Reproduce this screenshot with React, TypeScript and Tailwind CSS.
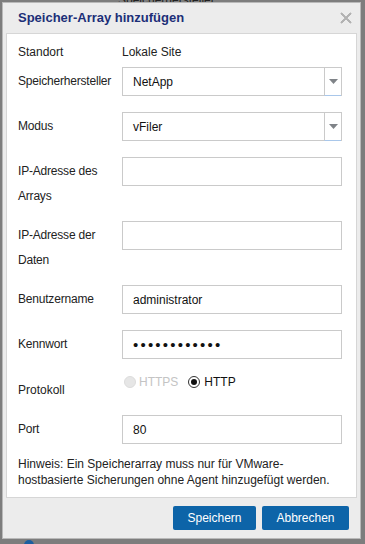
import React from 'react';

const font = { fontFamily: '"Liberation Sans", Arial, sans-serif' };

function Label({ children }: { children: React.ReactNode }) {
  return (
    <div className="w-[104px] shrink-0 pt-[2px] leading-[25px] text-[12px] tracking-[-0.2px] text-[#222]">{children}</div>
  );
}

function TextBox({ value, type = 'text' }: { value?: string; type?: string }) {
  const isPwd = type === 'password';
  return (
    <input
      type={type}
      readOnly
      value={value ?? ''}
      className={
        isPwd
          ? 'h-[29px] w-[220px] border border-[#cacaca] bg-white pl-[10px] text-[15px] tracking-[2.2px] text-[#111] outline-none'
          : 'h-[29px] w-[220px] border border-[#cacaca] bg-white pl-[10px] text-[12px] text-[#111] outline-none'
      }
      style={font}
    />
  );
}

function Select({ value }: { value: string }) {
  return (
    <div className="flex h-[29px] w-[220px] border border-[#cacaca] bg-white">
      <div className="flex flex-1 items-center pl-[10px] text-[12px] text-[#111]">{value}</div>
      <div className="-mb-px flex w-[17px] items-center justify-center border-b border-l border-[#cacaca] border-b-[#a9c7ea]">
        <svg width="9" height="5" viewBox="0 0 9 5">
          <path d="M0 0 H9 L4.5 5 Z" fill="#7f8388" />
        </svg>
      </div>
    </div>
  );
}

export default function App() {
  return (
    <div className="relative h-[544px] w-[365px] overflow-hidden bg-[#7d7d7d] pl-[2px] pt-[2px]" style={font}>
      <div className="absolute left-[118px] top-[-9px] text-[12px] text-[#222]">Speicherhersteller</div>
      <div className="absolute left-[24px] top-[540px] h-[10px] w-[10px] rounded-full bg-[#1d5fa0]" />
      <div className="relative flex h-[537px] w-[359px] flex-col border border-[#b9b9b9] bg-[#ececec]">
        <div className="flex h-[30px] items-center justify-between pl-[15px] pr-[8px]">
          <span className="text-[13px] font-bold text-[#1c2f78]">Speicher-Array hinzufügen</span>
          <svg width="12" height="12" viewBox="0 0 12 12">
            <path d="M1 1 L11 11 M11 1 L1 11" stroke="#8c8c8c" strokeWidth="1.6" />
            <path d="M1 1 L11 11 M11 1 L1 11" stroke="#d8d8d8" strokeWidth="0.5" />
          </svg>
        </div>
        <div className="mx-[3px] flex h-[465px] flex-col border border-[#d6d6d6] bg-white px-[11px] pt-[6px] text-[12px] text-[#222]">
          <div className="flex h-[24px] items-center">
            <div className="w-[104px] shrink-0">Standort</div>
            <div>Lokale Site</div>
          </div>
          <div className="mt-[3px] flex">
            <Label>Speicherhersteller</Label>
            <Select value="NetApp" />
          </div>
          <div className="mt-[16px] flex">
            <Label>Modus</Label>
            <Select value="vFiler" />
          </div>
          <div className="mt-[16px] flex h-[52px]">
            <Label>
              IP-Adresse des
              <br />
              Arrays
            </Label>
            <TextBox />
          </div>
          <div className="mt-[12px] flex h-[52px]">
            <Label>
              IP-Adresse der
              <br />
              Daten
            </Label>
            <TextBox />
          </div>
          <div className="mt-[12px] flex">
            <Label>Benutzername</Label>
            <TextBox value="administrator" />
          </div>
          <div className="mt-[16px] flex">
            <Label>Kennwort</Label>
            <TextBox type="password" value="administrat1" />
          </div>
          <div className="mt-[11px] flex h-[32px]">
            <div className="w-[104px] shrink-0 pt-[12px] leading-[16px]">Protokoll</div>
            <div className="flex h-[24px] items-center pl-[2px]">
              <span className="h-[12px] w-[12px] rounded-full border border-[#dcdcdc] bg-[#e6e6e6]" />
              <span className="ml-[3px] text-[12px] text-[#c4c4c4]">HTTPS</span>
              <span className="ml-[10px] flex h-[12px] w-[12px] items-center justify-center rounded-full border border-[#333] bg-white">
                <span className="h-[6px] w-[6px] rounded-full bg-[#111]" />
              </span>
              <span className="ml-[4px] text-[12px] text-[#111]">HTTP</span>
            </div>
          </div>
          <div className="mt-[13px] flex">
            <Label>Port</Label>
            <TextBox value="80" />
          </div>
          <div className="mt-[12px] leading-[16px] text-[12px] text-[#222]">
            Hinweis: Ein Speicherarray muss nur für VMware-
            <br />
            hostbasierte Sicherungen ohne Agent hinzugefügt werden.
          </div>
        </div>
        <div className="flex flex-1 items-center justify-end gap-[6px] pr-[11px]">
          <button className="h-[24px] w-[83px] rounded-[2px] bg-[#0d64a8] text-[12px] text-white">Speichern</button>
          <button className="h-[24px] w-[87px] rounded-[2px] bg-[#0d64a8] text-[12px] text-white">Abbrechen</button>
        </div>
      </div>
    </div>
  );
}
